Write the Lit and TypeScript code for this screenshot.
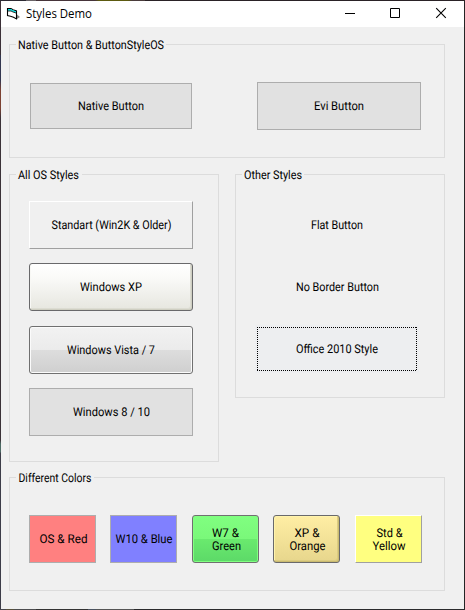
import { LitElement, html, svg, css } from "lit";
import { customElement, property } from "lit/decorators.js";

/** One line of a caption: text, advance width in px, horizontal nudge. */
type Line = [string, number, number?];

@customElement("fit-label")
class FitLabel extends LitElement {
  @property({ attribute: false }) lines: Line[] = [];
  static styles = css`
    :host { display: block; flex: none; }
    svg { display: block; overflow: visible; }
    text { font: 12.1px Roboto, "Liberation Sans", Arial, sans-serif; fill: #000; text-rendering: geometricPrecision; }
  `;
  render() {
    const w = Math.ceil(Math.max(...this.lines.map((l) => l[1])) / 2) * 2;
    const h = this.lines.length > 1 ? this.lines.length * 13 : 14;
    return html`<svg width=${w} height=${h}>
      ${this.lines.map(
        ([t, len, dx = 0], i) => svg`<text x=${(w - len) / 2 + dx} y=${11 + i * 13}
          textLength=${len} lengthAdjust="spacingAndGlyphs">${t}</text>`
      )}
    </svg>`;
  }
}

@customElement("style-button")
class StyleButton extends LitElement {
  @property({ attribute: false }) lines: Line[] = [];
  @property({ reflect: true }) look = "win10";
  static styles = css`
    :host { display: flex; align-items: center; justify-content: center; box-sizing: border-box; height: 48px; }
    :host([look="win10"]) { background: #e1e1e1; border: 1px solid #adadad; }
    :host([look="red"]) { background: #ff8080; border: 1px solid #adadad; }
    :host([look="blue"]) { background: #8080ff; border: 1px solid #adadad; }
    :host([look="std"]) { border: 1px solid; border-color: #fff #a0a0a0 #a0a0a0 #fff; }
    :host([look="yellow"]) { background: #ffff80; border: 1px solid; border-color: #fff #a0a0a0 #a0a0a0 #fff; }
    :host([look="xp"]) {
      border: 1px solid #69696b; border-radius: 3px;
      background: linear-gradient(#fff, #fafaf8 30%, #e6e6df);
      box-shadow: inset -1px -1px 0 #cfcfc2, inset -2px -2px 0 #dcdcd2, inset 1px 0 0 #f8f8f5;
    }
    :host([look="orange"]) {
      border: 1px solid #69696b; border-radius: 3px;
      background: linear-gradient(#ffeea4, #e7d68c);
      box-shadow: inset -1px -1px 0 #cabb71, inset -2px -2px 0 #dccc82, inset 1px 1px 0 #fff3ac;
    }
    :host([look="win7"]) {
      border: 1px solid #707070; border-radius: 3px;
      background: linear-gradient(#f2f2f2, #ebebeb 50%, #dddddd 50%, #cfcfcf);
      box-shadow: inset 0 0 0 1px #fbfbfb;
    }
    :host([look="green"]) {
      border: 1px solid #707070; border-radius: 3px;
      background: linear-gradient(#80ff80, #7af87a 50%, #6aea6e 50%, #5cd968);
      box-shadow: inset 0 0 0 1px #80ff80;
    }
    :host([look="office"]) { background: #edeef0; padding: 2px; }
    .focus {
      flex: 1; align-self: stretch; display: flex; align-items: center; justify-content: center;
      padding: 1px;
      background:
        repeating-linear-gradient(90deg, #000 0 1px, transparent 1px 2px) top / 100% 1px no-repeat,
        repeating-linear-gradient(90deg, #000 0 1px, transparent 1px 2px) bottom / 100% 1px no-repeat,
        repeating-linear-gradient(#000 0 1px, transparent 1px 2px) left / 1px 100% no-repeat,
        repeating-linear-gradient(#000 0 1px, transparent 1px 2px) right / 1px 100% no-repeat;
    }
  `;
  render() {
    const label = html`<fit-label .lines=${this.lines}></fit-label>`;
    return this.look === "office" ? html`<div class="focus">${label}</div>` : label;
  }
}

@customElement("group-frame")
class GroupFrame extends LitElement {
  @property({ attribute: false }) caption: Line = ["", 0];
  static styles = css`
    :host { display: block; position: relative; box-sizing: border-box; border: 1px solid #dcdcdc; }
    .caption { position: absolute; left: 6px; top: -7px; padding: 0 2px; background: #f0f0f0; }
  `;
  render() {
    return html`<div class="caption"><fit-label .lines=${[this.caption]}></fit-label></div><slot></slot>`;
  }
}

@customElement("app-root")
class AppRoot extends LitElement {
  static styles = css`
    :host {
      display: flex; flex-direction: column; box-sizing: border-box; width: 465px; height: 610px;
      padding: 1px; overflow: hidden;
      background:
        linear-gradient(90deg, #2c2a33 0 26px, #6a6468 26px 36px, #46343a 36px 95px, #5c5a10 99px 128px, #4a3c3c 132px 145px, #2a2226 145px) top / 100% 1px no-repeat,
        linear-gradient(90deg, #45454c 0 6px, #57503c 6px 14px, #4c4c4e 14px 36px, #333 36px 88px, #4b5360 88px 96px, #555 96px 134px, #2a2a2c 134px) bottom / 100% 1px no-repeat,
        linear-gradient(#3b3037 0 55px, #333750 55px 80px, #7c4232 90px 108px, #3b3238 118px 440px, #4c6a64 444px 452px, #3c3c48 453px) left / 1px 100% no-repeat,
        #242424;
    }
    .title { height: 26px; flex: none; background: #fff; display: flex; align-items: center; }
    .appicon { margin-left: 5px; display: block; }
    .name { width: 68px; height: 26px; margin-left: 4px; }
    .name text { font: 12px "Open Sans", "Noto Sans", sans-serif; fill: #000; }
    .sys { margin-left: auto; display: flex; }
    .sys svg { display: block; width: 46px; height: 26px; }
    .client { flex: 1; background: #f0f0f0; padding: 17px 19px 0 8px; display: flex; flex-direction: column; gap: 16px; }
    .native { height: 114px; }
    .row { display: flex; justify-content: space-between; align-items: center; }
    .native .row { padding: 37px 23px 0 20px; }
    .n { width: 162px; height: 46px; }
    .e { width: 164px; }
    .middle { display: flex; justify-content: space-between; align-items: flex-start; height: 287px; }
    .os { width: 210px; height: 288px; }
    .other { width: 210px; height: 224px; }
    .stack { display: grid; padding: 26px 25px 0 19px; row-gap: 14px; }
    .os .stack > :nth-child(2) { margin-bottom: 1px; }
    .colors { height: 114px; }
    .colors .row { padding: 37px 0 0 19px; display: grid; grid-template-columns: 67px 67px 67px 67px 67px; justify-content: start; column-gap: 14px; }
    .colors .row > :nth-child(n + 3) { margin: 0 -1px 0 1px; }
    .colors .row > :nth-child(5) { margin: 0 -2px 0 2px; }
  `;
  render() {
    const b = (look: string, lines: Line[], cls = "") =>
      html`<style-button class=${cls} look=${look} .lines=${lines}></style-button>`;
    return html`
      <div class="title">
        <svg class="appicon" width="16" height="16">
          <path d="M1.500 2.500h3.500l2 1.200 3.500 1.200v8L7.500 11.300 4.500 10.300l-3-.8z" fill="#fff" stroke="#000" stroke-width="1.100"/>
          <path d="M2 3h3l2 1.300 3 1v1.400L7 5.800 5 4.800H2z" fill="#00dcdc"/>
          <path d="M2 5h3l2 1 3 1" fill="none" stroke="#000" stroke-width=".8"/>
          <path d="M11 8.500l3 2.500-3 2z" fill="#808080"/>
        </svg>
        <svg class="name"><text x="0" y="17" textLength="66" lengthAdjust="spacingAndGlyphs">Styles Demo</text></svg>
        <div class="sys">
          <svg><path d="M19 12.500h10" stroke="#000"/></svg>
          <svg><path d="M18.500 7.500h9v9h-9z" fill="none" stroke="#000"/></svg>
          <svg><path d="M18.200 7.200l9.600 9.600M27.800 7.200l-9.600 9.600" stroke="#000" stroke-width="1.100"/></svg>
        </div>
      </div>
      <div class="client">
        <group-frame class="native" .caption=${["Native Button & ButtonStyleOS", 146] as Line}>
          <div class="row">
            ${b("win10", [["Native Button", 66]], "n")}
            ${b("win10", [["Evi Button", 50]], "e")}
          </div>
        </group-frame>
        <div class="middle">
          <group-frame class="os" .caption=${["All OS Styles", 61, -0.5] as Line}>
            <div class="stack">
              ${b("std", [["Standart (Win2K & Older)", 120, 0.5]])}
              ${b("xp", [["Windows XP", 62]])}
              ${b("win7", [["Windows Vista / 7", 88]])}
              ${b("win10", [["Windows 8 / 10", 77, 0.5]])}
            </div>
          </group-frame>
          <group-frame class="other" .caption=${["Other Styles", 58] as Line}>
            <div class="stack">
              ${b("flat", [["Flat Button", 52]])}
              ${b("flat", [["No Border Button", 83, 0.5]])}
              ${b("office", [["Office 2010 Style", 82]])}
            </div>
          </group-frame>
        </div>
        <group-frame class="colors" .caption=${["Different Colors", 73] as Line}>
          <div class="row">
            ${b("red", [["OS & Red", 48, 0.5]])}
            ${b("blue", [["W10 & Blue", 57]])}
            ${b("green", [["W7 &", 27, -0.5], ["Green", 29, 0.5]])}
            ${b("orange", [["XP &", 25], ["Orange", 36, 0.5]])}
            ${b("yellow", [["Std &", 26, 0.5], ["Yellow", 33]])}
          </div>
        </group-frame>
      </div>
    `;
  }
}
